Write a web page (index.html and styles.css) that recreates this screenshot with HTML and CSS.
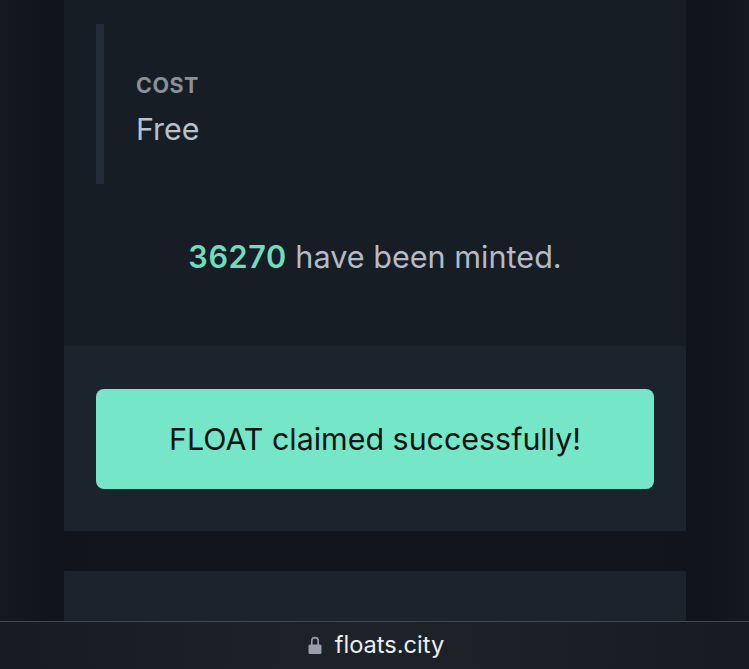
FILE: index.html
```html
<!DOCTYPE html>
<html lang="en">
<head>
  <meta charset="utf-8">
  <meta name="viewport" content="width=device-width, initial-scale=1.0">
  <title>FLOAT</title>
  <link rel="stylesheet" href="styles.css">
</head>
<body>
  <div class="page">
    <div class="card">
      <div class="card-body">
        <div class="stat">
          <div class="stat-label">COST</div>
          <div class="stat-value">Free</div>
        </div>
        <p class="minted"><span class="minted-count">36270</span> have been minted.</p>
      </div>
      <div class="card-footer">
        <button class="btn-claimed">FLOAT claimed successfully!</button>
      </div>
    </div>
    <div class="card card-next"></div>
  </div>

  <div class="address-bar">
    <svg class="lock" width="14" height="18" viewBox="0 0 14 18">
      <path d="M3.8 9V4.8a3.2 3.2 0 0 1 6.4 0V9" fill="none" stroke="#9a9ea8" stroke-width="1.6"/>
      <rect x="0.5" y="8.4" width="13" height="9.6" rx="1.6" fill="#9a9ea8"/>
    </svg>
    <span class="url">floats.city</span>
  </div>
</body>
</html>
```

FILE: styles.css
```css
* {
  box-sizing: border-box;
}

html,
body {
  margin: 0;
  height: 669px;
  overflow: hidden;
}

body {
  font-family: Inter, 'Liberation Sans', sans-serif;
  background: #11161d;
}

.page {
  height: 621px;
  padding: 0 63px 0 64px;
  overflow: hidden;
  background: linear-gradient(90deg, #13191f 0%, #0f141b 8.5%, #11161d 12%, #11161d 88%, #0f141b 93%, #13191f 100%);
}

.card {
  background: #161d25;
}

.card-body {
  height: 346px;
  padding: 24px 32px 0;
}

.stat {
  height: 160px;
  padding: 45px 0 0 32px;
  border-left: 8px solid #222d39;
}

.stat-label {
  font-size: 21.5px;
  font-weight: 700;
  letter-spacing: 0.5px;
  line-height: 32px;
  color: #899099;
}

.stat-value {
  margin-top: 7px;
  font-size: 30.4px;
  line-height: 42px;
  color: #b9c1cb;
}

.minted {
  margin: 50px 0 0;
  text-align: center;
  font-size: 30.6px;
  line-height: 46px;
  color: #b4bbc6;
}

.minted-count {
  font-weight: 600;
  letter-spacing: 0.6px;
  color: #6fdcc0;
}

.card-footer {
  height: 185px;
  padding: 43px 32px 0;
  background: #1b232c;
}

.btn-claimed {
  display: block;
  width: 100%;
  height: 100px;
  border: none;
  border-radius: 8px;
  background: #76e6c8;
  color: #0c1514;
  font-family: inherit;
  font-size: 30.4px;
}

.card-next {
  height: 60px;
  margin-top: 40px;
  background: #1b232c;
}

.address-bar {
  height: 48px;
  padding: 0 0 2px 3px;
  display: flex;
  align-items: center;
  justify-content: center;
  gap: 13px;
  border-top: 1px solid #43474d;
  background: linear-gradient(90deg, #171c23 0%, #1e232a 50%, #171c23 100%);
}

.url {
  font-size: 23.6px;
  color: #eceef0;
}
```
